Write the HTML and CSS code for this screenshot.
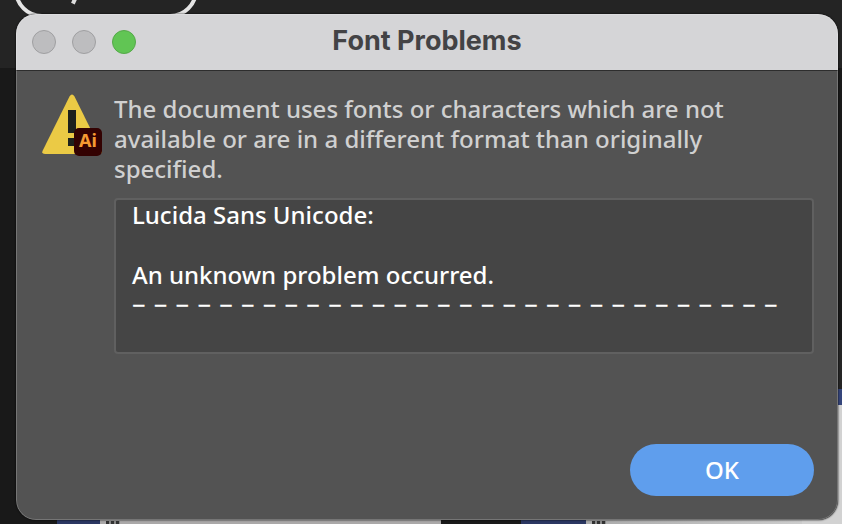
FILE: index.html
```
<!DOCTYPE html>
<html lang="en">
<head>
<meta charset="utf-8">
<title>Font Problems</title>
<link rel="stylesheet" href="styles.css">
</head>
<body>

<!-- start:desktop -->
<div class="desktop" aria-hidden="true">
	<div class="toolbar"><span class="pill"></span><span class="pill_tail"></span></div>
	<div class="panel"></div>
	<div class="card card_left"><span class="scrap"></span></div>
	<div class="card card_middle"><span class="scrap"></span></div>
	<div class="card card_right"></div>
</div>
<!-- end:desktop -->

<!-- start:dialog -->
<div class="dialog" role="alertdialog" aria-labelledby="title" aria-describedby="message">

	<div class="titlebar">
		<div class="lights">
			<button class="light" type="button" aria-label="Close" disabled></button>
			<button class="light" type="button" aria-label="Minimize" disabled></button>
			<button class="light green" type="button" aria-label="Zoom"></button>
		</div>
		<h1 id="title">Font Problems</h1>
	</div>

	<div class="content">
		<svg class="warning" viewBox="0 1 62 64" aria-hidden="true">
			<path d="M27.5 3.5Q30 -0.5 32.500 3.500L59.500 58Q60.500 61 57 61H3Q-0.500 61 0.500 58Z" fill="#ebca45"/>
			<path d="M26 17h8v23h-8zM26 45h8v8h-8z" fill="#1d211d"/>
			<rect x="32" y="35" width="28" height="28" rx="5" fill="#330202"/>
			<text class="ai" x="46" y="54" text-anchor="middle">Ai</text>
		</svg>
		<div class="column">
			<label class="message" id="message" for="problems">The document uses fonts or characters which are not available or are in a different format than originally specified.</label>
			<textarea class="problems" id="problems" readonly>Lucida Sans Unicode:

An unknown problem occurred.
−&#8196;−&#8196;−&#8196;−&#8196;−&#8196;−&#8196;−&#8196;−&#8196;−&#8196;−&#8196;−&#8196;−&#8196;−&#8196;−&#8196;−&#8196;−&#8196;−&#8196;−&#8196;−&#8196;−&#8196;−&#8196;−&#8196;−&#8196;−&#8196;−&#8196;−&#8196;−&#8196;−&#8196;−&#8196;−</textarea>
		</div>
	</div>

	<div class="actions">
		<button class="ok" type="button">OK</button>
	</div>

</div>
<!-- end:dialog -->

</body>
</html>
```
FILE: styles.css
```
* {box-sizing: border-box;}
body {margin: 0; min-height: 100vh; background: #191919; overflow: hidden; font: 500 24px/30px "Noto Sans", "Open Sans", sans-serif;}

/* ---------- DESKTOP ---------- */
.desktop {position: absolute; inset: 0; overflow: hidden;}
.desktop div, .desktop span {position: absolute;}
.toolbar {top: 0; left: 0; right: 0; height: 68px; background: #242424;}
.pill {left: 14px; top: -38px; width: 184px; height: 56px; border: 4px solid #e4e4e4; border-radius: 28px;}
.pill_tail {left: 73px; top: -6px; width: 4px; height: 10px; background: #ddd; transform: rotate(25deg);}
.panel {right: 0; top: 340px; width: 40px; height: 50px; background: #252525;}
.card {background: #d2d2d2;}
.card_right {right: 0; top: 389px; bottom: 0; width: 40px; border-top: 16px solid #35457b;}
.card_left {left: 57px; top: 500px; bottom: 0; width: 384px; background: #aaa8a8; border-left: 43px solid #2b3762;}
.card_middle {left: 521px; right: 0; top: 500px; bottom: 0; background: linear-gradient(90deg, #aaa, #d2d2d2); border-left: 65px solid #2b3762;}
.scrap {left: 6px; bottom: 0; width: 14px; height: 3px; background: repeating-linear-gradient(90deg, #333 0 3px, #888 3px 5px);}

/* ---------- DIALOG ---------- */
.dialog {position: relative; margin: 14px 4px 4px 16px; background: #535353; border-radius: 20px; overflow: hidden; box-shadow: 0 0 2px #000;}
.dialog:after {content: ""; position: absolute; inset: 0; border: 1px solid rgba(255,255,255,.2); border-radius: 20px; pointer-events: none;}
.titlebar {display: grid; grid-template-columns: 1fr auto 1fr; align-items: center; height: 57px; padding: 0 16px; background: #d5d5d7; border-bottom: 1px solid #2d2d2d;}
.lights {display: flex; gap: 16px;}
.light {width: 24px; height: 24px; padding: 0; background: #bdbdbf; border: 1px solid #9f9fa1; border-radius: 50%;}
.green {background: #61c554; border-color: #55a849;}
h1 {margin: 0; padding-bottom: 2px; color: #434345; font: bold 27px/30px Inter, sans-serif;}
.content {display: flex; gap: 10px; padding: 23px 24px 0 26px;}
.warning {flex: none; width: 62px; height: 64px;}
.ai {fill: #f59a32; font: bold 18px "Noto Sans", sans-serif;}
.column {flex: 1; display: flex; flex-direction: column; gap: 14px;}
.message {padding-right: 24px; color: #d0d0d0;}
.problems {width: 100%; height: 156px; padding: 0 16px; background: #454545; border: 2px solid #606060; border-radius: 4px; outline: 0; color: #fff; font: inherit; resize: none; overflow: hidden;}
.actions {display: flex; justify-content: flex-end; padding: 90px 24px 24px;}
.ok {width: 184px; height: 52px; padding: 0; background: #5f9eed; border: 0; border-radius: 26px; color: #fff; font: inherit;}
```
